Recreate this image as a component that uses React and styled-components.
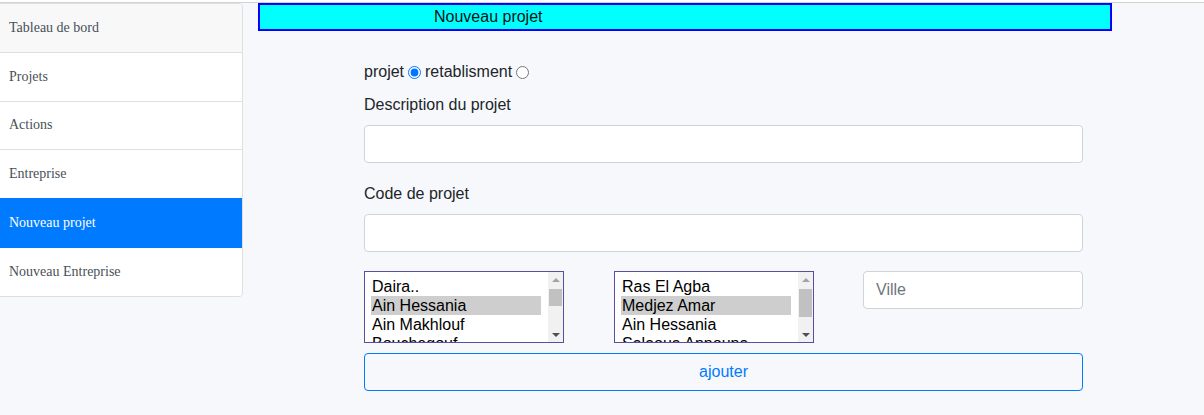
// Nouveau projet - formulaire + menu lateral

import styled, { createGlobalStyle } from "styled-components";

const GlobalStyle = createGlobalStyle`
  body {
    margin: 0;
    background: #f7f8fc;
    font-family: "Liberation Sans", Arial, sans-serif;
    color: #212529;
  }
  * { box-sizing: border-box; }
`;

// fine ligne grise tout en haut
const TopRule = styled.div`
  height: 3px;
  background: #fff;
  border-bottom: 1px solid #d3d3d3;
`;

const Layout = styled.div`
  display: flex;
  align-items: flex-start;
`;

const Sidebar = styled.nav`
  width: 244px;
  margin-left: -1px;
  border: 1px solid #dfdfdf;
  border-radius: 0 4px 4px 0;
  background: #fff;
  overflow: hidden;
  display: flex;
  flex-direction: column;
`;

const NavItem = styled.div`
  padding-left: 9px;
  display: flex;
  align-items: center;
  font-family: "Liberation Serif", "Times New Roman", serif;
  font-size: 14px;
  color: ${(p) => (p.$active ? "#fff" : "#495057")};
  background: ${(p) => (p.$active ? "#007bff" : p.$muted ? "#f8f8f9" : "#fff")};
  border-bottom: 1px solid ${(p) => (p.$active ? "#007bff" : "#dfdfdf")};
  margin-top: ${(p) => (p.$active ? "-1px" : "0")};
  height: ${(p) => (p.$active ? "49.8px" : "48.8px")};
  &:last-child { border-bottom: none; height: 47.8px; }
`;

const Main = styled.main`
  flex: 1;
  padding-left: 15px;
`;

const TitleBar = styled.div`
  width: 854px;
  border: 2px solid #0000ff;
  background: #00ffff;
  line-height: 24px;
  font-size: 16px;
  padding-left: 174px;
  color: #111;
`;

const Form = styled.form`
  width: 719px;
  margin: 29px 0 0 106px;
  font-size: 16px;
`;

const RadioRow = styled.div`
  line-height: 24px;
  margin-bottom: 9px;
  display: flex;
  align-items: center;
`;

const Radio = styled.input`
  width: 13px;
  height: 13px;
  margin: 1px 4px 0 4px;
`;

const Label = styled.label`
  display: block;
  line-height: 24px;
  margin-bottom: 8px;
`;

const Group = styled.div`
  margin-bottom: ${(p) => p.$mb ?? 19}px;
`;

const TextInput = styled.input`
  display: block;
  width: 100%;
  height: 38px;
  padding: 0 12px;
  font-family: inherit;
  font-size: 16px;
  color: #495057;
  background: #fff;
  border: 1px solid #ced4da;
  border-radius: 4px;
  &::placeholder { color: #6c757d; }
`;

const SelectRow = styled.div`
  display: flex;
  align-items: flex-start;
  gap: 50px;
  margin-top: 19px;
`;

const ListBox = styled.div`
  width: 200px;
  height: 72px;
  flex: none;
  border: 1px solid #5a4f9e;
  background: #fff;
  display: flex;
`;

const Options = styled.div`
  flex: 1;
  overflow: hidden;
  padding: 5px 7px 0 6px;
`;

const Option = styled.div`
  height: 19px;
  line-height: 19px;
  padding-left: 1px;
  white-space: nowrap;
  color: #000;
  background: ${(p) => (p.$selected ? "#cecece" : "transparent")};
`;

const ScrollTrack = styled.div`
  width: 15px;
  background: #f1f1f1;
  display: flex;
  flex-direction: column;
`;

const ArrowBtn = styled.div`
  height: 15px;
  flex: none;
  display: flex;
  align-items: center;
  justify-content: center;
  margin-top: ${(p) => (p.$down ? "auto" : "0")};
  &::after {
    content: "";
    width: 0;
    height: 0;
    border-left: 4px solid transparent;
    border-right: 4px solid transparent;
    ${(p) =>
      p.$down
        ? "border-top: 4px solid #505050;"
        : "border-bottom: 4px solid #a3a3a3;"}
  }
`;

const Thumb = styled.div`
  margin: 2px 1px 0;
  background: #c1c1c1;
  flex: none;
`;

const VilleBox = styled.div`
  flex: 1;
  margin-left: -1px;
`;

const AddButton = styled.button`
  display: block;
  width: 100%;
  height: 38px;
  margin-top: 10px;
  font-family: inherit;
  font-size: 16px;
  color: #007bff;
  background: transparent;
  border: 1px solid #007bff;
  border-radius: 4px;
`;

const menu = [
  "Tableau de bord",
  "Projets",
  "Actions",
  "Entreprise",
  "Nouveau projet",
  "Nouveau Entreprise",
];

const dairas = [
  "Daira..",
  "Ain Hessania",
  "Ain Makhlouf",
  "Bouchegouf",
  "Guelma",
  "Hammam Debagh",
  "Hammam N'Bails",
  "Heliopolis",
  "Khezarra",
  "Oued Zenati",
];

const communes = [
  "Ras El Agba",
  "Medjez Amar",
  "Ain Hessania",
  "Salaoua Announa",
  "Guelma",
];

// liste deroulante (multiple) dessinee a la main pour garder la barre
function FakeSelect({ items, selected, thumb }) {
  return (
    <ListBox>
      <Options>
        {items.map((it, i) => (
          <Option key={it + i} $selected={i === selected}>{it}</Option>
        ))}
      </Options>
      <ScrollTrack>
        <ArrowBtn />
        <Thumb style={{ height: thumb }} />
        <ArrowBtn $down />
      </ScrollTrack>
    </ListBox>
  );
}

export default function App() {
  return (
    <>
      <GlobalStyle />
      <TopRule />
      <Layout>
        <Sidebar>
          {menu.map((m, i) => (
            <NavItem key={m} $muted={i === 0} $active={m === "Nouveau projet"}>
              {m}
            </NavItem>
          ))}
        </Sidebar>
        <Main>
          <TitleBar>Nouveau projet</TitleBar>
          <Form onSubmit={(e) => e.preventDefault()}>
            <RadioRow>
              projet<Radio type="radio" name="type" defaultChecked />retablisment<Radio type="radio" name="type" />
            </RadioRow>
            <Group>
              <Label>Description du projet</Label>
              <TextInput type="text" />
            </Group>
            <Group $mb={0}>
              <Label>Code de projet</Label>
              <TextInput type="text" />
            </Group>
            <SelectRow>
              <FakeSelect items={dairas} selected={1} thumb={17} />
              <FakeSelect items={communes} selected={1} thumb={28} />
              <VilleBox>
                <TextInput type="text" placeholder="Ville" />
              </VilleBox>
            </SelectRow>
            <AddButton type="submit">ajouter</AddButton>
          </Form>
        </Main>
      </Layout>
    </>
  );
}
